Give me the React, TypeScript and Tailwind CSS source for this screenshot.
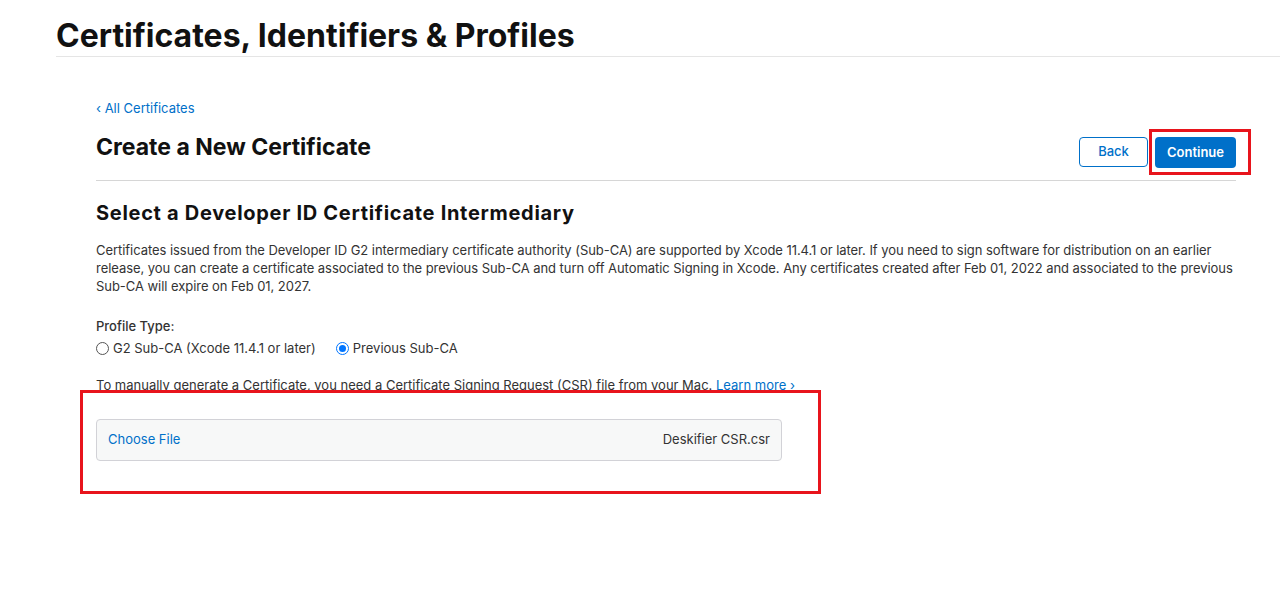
import { useState } from 'react';

const font = { fontFamily: 'Inter, "Liberation Sans", sans-serif' };

export default function App() {
  const [profile, setProfile] = useState<'g2' | 'previous'>('previous');

  return (
    <div className="relative min-h-[611px] w-[1280px] bg-white text-[#1d1d1f]" style={font}>
      <header className="ml-[56px] border-b border-[#e5e5e5] pt-[17px] pb-[1px]">
        <h1 className="text-[32px] font-bold leading-[38px] text-[#111]">
          Certificates, Identifiers &amp; Profiles
        </h1>
      </header>

      <main className="mx-[96px] mr-[44px] pt-[38px]">
        <a href="#" className="text-[13px] leading-[16px] text-[#0070c9]">
          ‹ All Certificates
        </a>

        <div className="mt-[11px] flex items-start justify-between border-b border-[#d6d6d6] pb-[12px]">
          <h2 className="pt-[2px] text-[23px] font-bold leading-[30px] text-[#111]">
            Create a New Certificate
          </h2>
          <div className="mt-[7px] flex gap-[7px]">
            <button className="h-[30px] w-[69px] rounded-[4px] border border-[#0070c9] text-[13px] font-medium text-[#0070c9]">
              Back
            </button>
            <button className="h-[31px] w-[81px] rounded-[4px] bg-[#0070c9] text-[13px] font-semibold text-white">
              Continue
            </button>
          </div>
        </div>

        <h3 className="mt-[20px] text-[20px] font-bold leading-[24px] tracking-[0.7px] text-[#111]">
          Select a Developer ID Certificate Intermediary
        </h3>

        <p className="mt-[16px] text-[13px] leading-[18px] tracking-[-0.05px] text-[#333]">
          Certificates issued from the Developer ID G2 intermediary certificate authority (Sub-CA) are supported by Xcode 11.4.1 or later. If you need to sign software for distribution on an earlier release, you can create a certificate associated to the previous Sub-CA and turn off Automatic Signing in Xcode. Any certificates created after Feb 01, 2022 and associated to the previous Sub-CA will expire on Feb 01, 2027.
        </p>

        <div className="mt-[22px] text-[13px] font-medium leading-[18px] text-[#333]">Profile Type:</div>
        <div className="mt-[4px] flex items-center gap-[20px] text-[13px] leading-[18px] text-[#333]">
          <label className="flex items-center gap-[4px]" onClick={() => setProfile('g2')}>
            <span className="flex h-[13px] w-[13px] items-center justify-center rounded-full border border-[#555] bg-white">
              {profile === 'g2' && <span className="h-[7px] w-[7px] rounded-full bg-[#0075ff]" />}
            </span>
            G2 Sub-CA (Xcode 11.4.1 or later)
          </label>
          <label className="flex items-center gap-[4px]" onClick={() => setProfile('previous')}>
            <span
              className={
                profile === 'previous'
                  ? 'flex h-[13px] w-[13px] items-center justify-center rounded-full border border-[#0075ff] bg-white'
                  : 'flex h-[13px] w-[13px] items-center justify-center rounded-full border border-[#555] bg-white'
              }
            >
              {profile === 'previous' && <span className="h-[7px] w-[7px] rounded-full bg-[#0075ff]" />}
            </span>
            Previous Sub-CA
          </label>
        </div>

        <p className="mt-[19px] text-[13px] leading-[18px] text-[#333]">
          To manually generate a Certificate, you need a Certificate Signing Request (CSR) file from your Mac.{' '}
          <a href="#" className="text-[#0070c9]">Learn more ›</a>
        </p>

        <div className="mt-[25px] flex h-[42px] w-[686px] items-center justify-between rounded-[4px] border border-[#d2d2d7] bg-[#f7f8f8] px-[11px] text-[13px]">
          <span className="text-[#0070c9]">Choose File</span>
          <span className="text-[#333]">Deskifier CSR.csr</span>
        </div>
      </main>

      {/* highlight frames */}
      <div className="pointer-events-none absolute left-[1149px] top-[129px] h-[46px] w-[102px] border-[3px] border-[#e8141c]" />
      <div className="pointer-events-none absolute left-[80px] top-[390px] h-[104px] w-[741px] border-[3px] border-[#e8141c]" />
    </div>
  );
}
